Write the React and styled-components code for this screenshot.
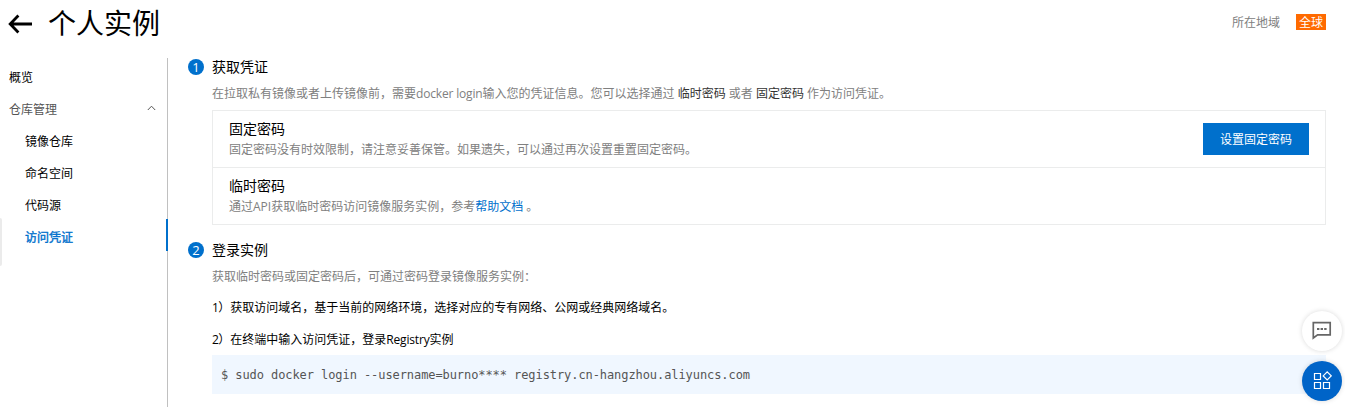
import React from "react";
import styled, { createGlobalStyle } from "styled-components";

const GlobalStyle = createGlobalStyle`
  * { box-sizing: border-box; }
  html, body { margin: 0; height: 100%; overflow: hidden; background: #fff; }
  body {
    font-family: "Open Sans", "Noto Sans CJK SC", sans-serif;
    font-size: 12px;
    line-height: 18px;
    color: #000;
  }
`;

const Page = styled.div`
  position: relative;
  display: flex;
  flex-direction: column;
  height: 407px;
  overflow: hidden;
`;

const Header = styled.header`
  display: flex;
  align-items: center;
  height: 46px;
  flex: none;
  margin-bottom: 12px;
  padding: 0 19px 0 8px;
`;

const BackIcon = styled.svg`
  display: block;
  margin: 1px 15px 0 0;
`;

const Title = styled.h1`
  margin: 0;
  flex: 1;
  font-size: 28px;
  line-height: 46px;
  font-weight: 400;
`;

const RegionLabel = styled.span`
  color: #808080;
  margin-right: 16px;
`;

const RegionTag = styled.span`
  height: 16px;
  width: 30px;
  margin-bottom: 2px;
  text-align: center;
  line-height: 17px;
  background: #ff6a00;
  color: #fff;
`;

const Body = styled.div`
  display: flex;
  flex: 1;
  min-height: 0;
`;

const Sidebar = styled.nav`
  width: 168px;
  flex: none;
  border-right: 1px solid #c0c0c0;
  padding-top: 1px;
`;

const NavItem = styled.div`
  display: flex;
  justify-content: space-between;
  align-items: center;
  height: 32px;
  padding: 6px 10px 0 ${(p) => (p.$nested ? 25 : 9)}px;
  color: ${(p) => (p.$active ? "#0070cc" : p.$group ? "#555" : "#000")};
  -webkit-text-stroke: ${(p) => (p.$active ? "0.4px #0070cc" : "0")};
  margin-right: -1px;
  border-right: 2px solid ${(p) => (p.$active ? "#0070cc" : "transparent")};
`;

const Chevron = styled.svg`
  margin-bottom: 5px;
`;

const Handle = styled.div`
  position: absolute;
  left: 0;
  top: 218px;
  width: 2px;
  height: 48px;
  background: #ebebeb;
  border-radius: 0 2px 2px 0;
`;

const Main = styled.main`
  flex: 1;
  padding: 0 19px 0 20px;
`;

const StepHead = styled.div`
  display: flex;
  align-items: center;
  height: 18px;
  gap: 8px;
`;

const StepNumber = styled.span`
  width: 16px;
  height: 16px;
  border-radius: 50%;
  background: #0070cc;
  color: #fff;
  font-size: 13px;
  line-height: 16px;
  text-align: center;
`;

const StepTitle = styled.h2`
  margin: 0;
  font-size: 14px;
  line-height: 18px;
  font-weight: 400;
`;

const StepBody = styled.div`
  padding: 9px 0 0 24px;
  margin-bottom: ${(p) => p.$gap || 0}px;
`;

const Note = styled.p`
  margin: 0;
  line-height: 18px;
  color: #808080;
`;

const Latin = styled.span`
  letter-spacing: ${(p) => (p.$digit ? -0.6 : -0.17)}px;
`;

const Term = styled.span`
  color: #333;
`;

const Link = styled.a`
  color: #0070cc;
`;

const Panel = styled.div`
  margin-top: 7px;
  border: 1px solid #ebecec;
`;

const PanelRow = styled.div`
  display: flex;
  align-items: center;
  justify-content: space-between;
  height: ${(p) => (p.$divided ? 57 : 56)}px;
  padding: 0 16px;
  border-bottom: ${(p) => (p.$divided ? "1px solid #ebecec" : "none")};
`;

const PanelTitle = styled.div`
  font-size: 14px;
  line-height: 20px;
  margin-bottom: 2px;
`;

const Button = styled.button`
  width: 106px;
  height: 32px;
  padding: 2px 0 0;
  border: 0;
  background: #0070cc;
  color: #fff;
  font: inherit;
`;

const Instruction = styled.p`
  margin: ${(p) => (p.$first ? 13 : 14)}px 0 0;
  line-height: 18px;
`;

const Code = styled.pre`
  margin: 6px 0 0;
  height: 39px;
  padding: 0 9px;
  background: #f0f7ff;
  color: #555;
  font-family: "DejaVu Sans Mono", monospace;
  font-size: 12px;
  letter-spacing: -0.077px;
  line-height: 40px;
`;

const FloatButtons = styled.div`
  position: absolute;
  right: 3px;
  top: 311px;
  display: flex;
  flex-direction: column;
  gap: 10px;
`;

const FloatButton = styled.div`
  display: flex;
  align-items: center;
  justify-content: center;
  width: 40px;
  height: 40px;
  border-radius: 50%;
  background: ${(p) => (p.$primary ? "#0064c8" : "#fff")};
  box-shadow: 0 0 5px rgba(0, 0, 0, 0.15);
`;

const nested = ["镜像仓库", "命名空间", "代码源"];

export default function App() {
  return (
    <Page>
      <GlobalStyle />
      <Header>
        <BackIcon width="25" height="20" viewBox="0 0 25 20" fill="none" stroke="#000" strokeWidth="2.8">
          <path d="M2 10H24M10.4 1.6L2.2 10l8.2 8.4" />
        </BackIcon>
        <Title>个人实例</Title>
        <RegionLabel>所在地域</RegionLabel>
        <RegionTag>全球</RegionTag>
      </Header>
      <Body>
        <Sidebar>
          <NavItem>概览</NavItem>
          <NavItem $group>
            仓库管理
            <Chevron width="9" height="6" viewBox="0 0 9 6" fill="none" stroke="#555">
              <path d="M0.8 5L4.5 1.2 8.2 5" />
            </Chevron>
          </NavItem>
          {nested.map((label) => (
            <NavItem key={label} $nested>{label}</NavItem>
          ))}
          <NavItem $nested $active>访问凭证</NavItem>
        </Sidebar>
        <Main>
          <StepHead>
            <StepNumber>1</StepNumber>
            <StepTitle>获取凭证</StepTitle>
          </StepHead>
          <StepBody $gap={16}>
            <Note>
              在拉取私有镜像或者上传镜像前，需要<Latin>docker login</Latin>输入您的凭证信息。您可以选择通过 <Term>临时密码</Term> 或者 <Term>固定密码</Term> 作为访问凭证。
            </Note>
            <Panel>
              <PanelRow $divided>
                <div>
                  <PanelTitle>固定密码</PanelTitle>
                  <Note>固定密码没有时效限制，请注意妥善保管。如果遗失，可以通过再次设置重置固定密码。</Note>
                </div>
                <Button>设置固定密码</Button>
              </PanelRow>
              <PanelRow>
                <div>
                  <PanelTitle>临时密码</PanelTitle>
                  <Note>通过API获取临时密码访问镜像服务实例，参考<Link>帮助文档</Link> 。</Note>
                </div>
              </PanelRow>
            </Panel>
          </StepBody>
          <StepHead>
            <StepNumber>2</StepNumber>
            <StepTitle>登录实例</StepTitle>
          </StepHead>
          <StepBody>
            <Note>获取临时密码或固定密码后，可通过密码登录镜像服务实例：</Note>
            <Instruction $first><Latin $digit>1</Latin>）获取访问域名，基于当前的网络环境，选择对应的专有网络、公网或经典网络域名。</Instruction>
            <Instruction><Latin $digit>2</Latin>）在终端中输入访问凭证，登录<Latin>Registry</Latin>实例</Instruction>
            <Code>$ sudo docker login --username=burno**** registry.cn-hangzhou.aliyuncs.com</Code>
          </StepBody>
        </Main>
      </Body>
      <Handle />
      <FloatButtons>
        <FloatButton>
          <svg width="20" height="20" viewBox="0 0 20 20" fill="none" stroke="#666" strokeWidth="1.7">
            <path d="M1.3 1.6H18.2V13.9H5.6L1.3 17Z" />
            <path d="M5 8h2.4M8.6 8H11M12.2 8h2.4" strokeWidth="2.2" />
          </svg>
        </FloatButton>
        <FloatButton $primary>
          <svg width="20" height="20" viewBox="0 0 20 20" fill="none" stroke="#fff" strokeWidth="1.2">
            <path d="M2.5 2.5h6v6h-6zM2.5 11.5h6v6h-6zM11.5 11.5h6v6h-6zM15.2 0.9l4 4-4 4-4-4z" />
          </svg>
        </FloatButton>
      </FloatButtons>
    </Page>
  );
}
